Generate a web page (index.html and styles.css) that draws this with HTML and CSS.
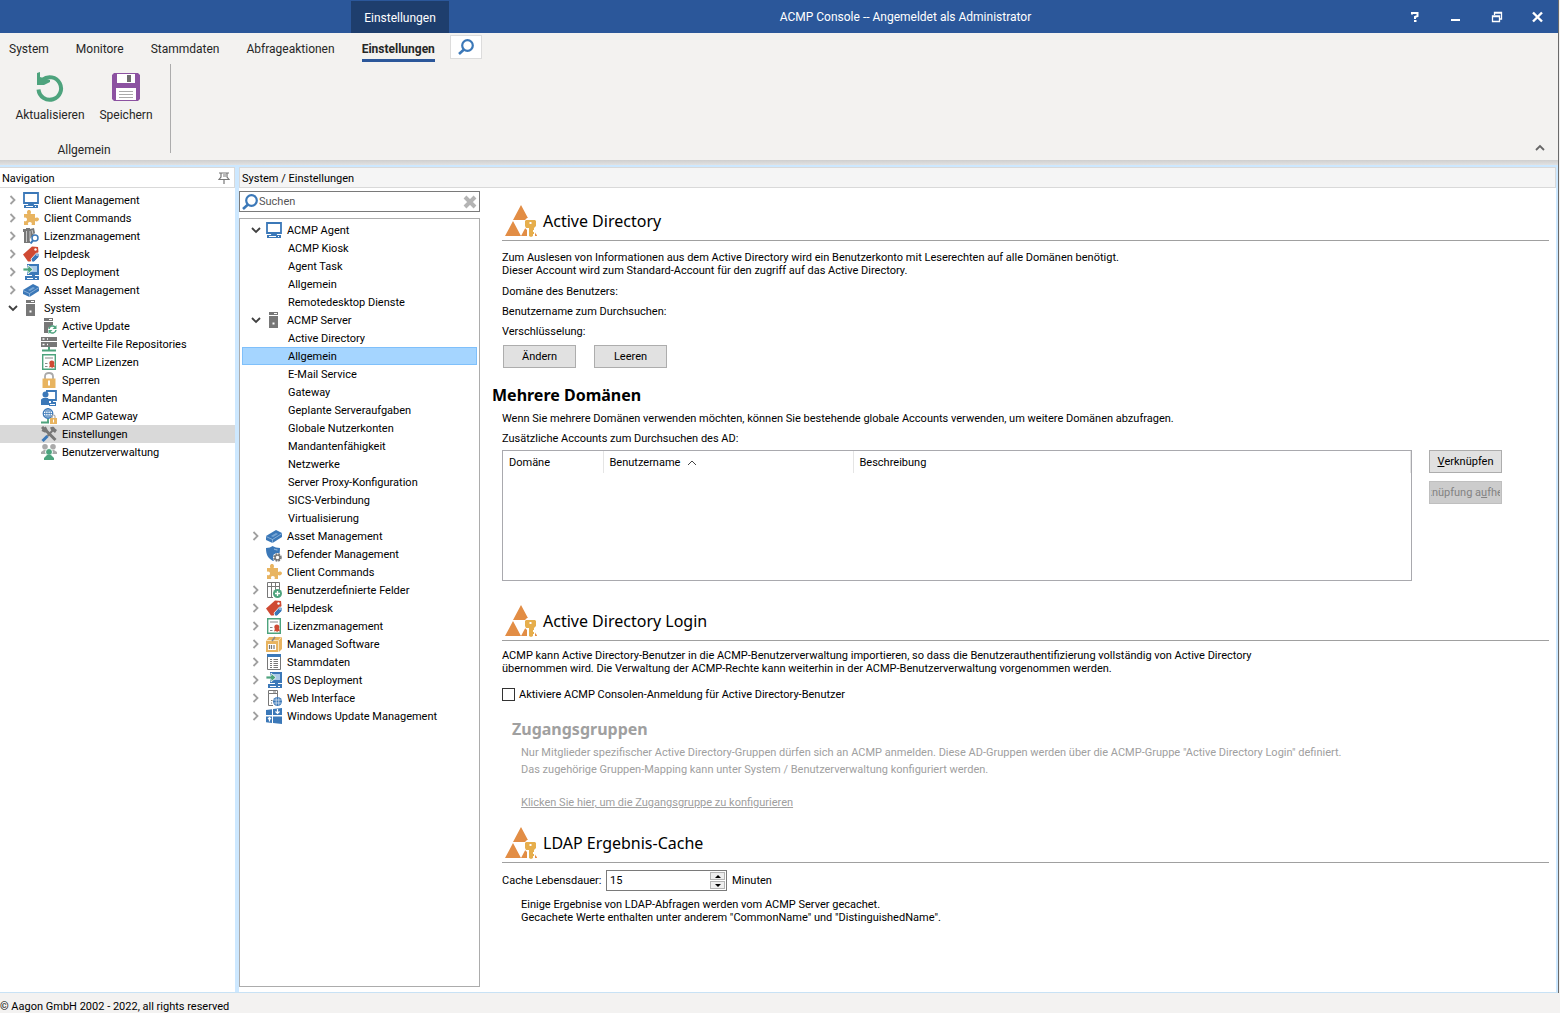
FILE: index.html
```html
<!DOCTYPE html>
<html lang="de">
<head>
<meta charset="utf-8">
<meta name="viewport" content="width=device-width, initial-scale=1">
<title>ACMP Console</title>
<link rel="stylesheet" href="styles.css">
</head>
<body>
<svg class="sprite" aria-hidden="true">
  <symbol id="closed" viewBox="0 0 10 10"><path d="M2.500 1l4 4-4 4" fill="none" stroke="#a0a0a0" stroke-width="1.800"/></symbol>
  <symbol id="open" viewBox="0 0 10 10"><path d="M1 3l4 4 4-4" fill="none" stroke="#404040" stroke-width="1.800"/></symbol>
  <symbol id="monitor" viewBox="0 0 16 16"><path d="M1 1h14v10H1zM6 11v2h4v-2" fill="none" stroke="#3b78b8" stroke-width="1.800"/><path d="M1 13h14v3H1z" fill="#3b78b8"/><path d="M3 14.500h7M12 14.500h1" stroke="#fff"/></symbol>
  <symbol id="puzzle" viewBox="0 0 16 16"><path d="M1 4h3.500C3.500 2.500 4 0 6 0s2.500 2.500 1.500 4H12v4c1.500-1 4-.5 4 1.300S13.500 12 12 11v4H8.500c1-2-.2-3-1.700-3s-2.500 1.200-1.500 3H1v-4c1.800.8 3-.2 3-1.600S2.700 7 1 7.800z" fill="#e8b460"/></symbol>
  <symbol id="binders" viewBox="0 0 16 16"><path d="M0 1h3V0h4v1l4-1 1 5-2 2-3 4v4H1V4H0z" fill="#777"/><path d="M3.500 3v11M7 3v10M9 2l1 4" stroke="#fff" stroke-width=".6"/><circle cx="12" cy="10" r="3" fill="#fff" stroke="#3b78b8" stroke-width="1.500"/><path d="M10 12.500L7.500 15.500" stroke="#3b78b8" stroke-width="2"/></symbol>
  <symbol id="tags" viewBox="0 0 16 16"><path d="M0 8.500L9 .5l6 .5.500 5-8 9.500H5z" fill="#cf4a33"/><circle cx="12.500" cy="3.500" r="1.200" fill="#fff"/><path d="M8 13l5.500-6 2.500.500v3.500L11 16H9z" fill="#3b78b8" stroke="#fff" stroke-width=".8"/><circle cx="14" cy="9" r=".8" fill="#fff"/></symbol>
  <symbol id="deploy" viewBox="0 0 16 16"><path d="M4 0h12v11H4z" fill="#3b78b8"/><path d="M6 2h8v6H6z" fill="#a9c9e8"/><path d="M9 11h3v2H9zM2 12h14v4H2z" fill="#3b78b8"/><path d="M4 14.500h6M12 14.500h2" stroke="#fff"/><path d="M0 4h5V1l5 4.500L5 10V7H0z" fill="#4da37d" stroke="#fff" stroke-width=".8"/></symbol>
  <symbol id="asset" viewBox="0 0 16 16"><path d="M0 8l10-6 6 3v4L6.500 15 0 12z" fill="#3b78b8"/><path d="M0 8.500l6.500 3L16 5.500M6.500 11.500V15" fill="none" stroke="#b8d2ec" stroke-width=".6"/><path d="M5 8l5-3 2 1-5 3z" fill="#78a6d5"/></symbol>
  <symbol id="server" viewBox="0 0 16 16"><path d="M3 0h9v3H3zM3 4h9v12H3z" fill="#777"/><path d="M8 1.500h3" stroke="#fff"/><path d="M6.500 10.500h2v2h-2z" fill="#fff"/></symbol>
  <symbol id="update" viewBox="0 0 16 16"><path d="M3 0h9v3H3zM3 4h9v3l-5 3v5H3z" fill="#777"/><path d="M8 1.500h3" stroke="#fff"/><path d="M8 11a3.500 3.500 0 0 1 6-2M15 12a3.500 3.500 0 0 1-6 2" fill="none" stroke="#4da37d" stroke-width="1.500"/><path d="M15.500 7v4h-4zM7.500 16v-4h4z" fill="#4da37d"/></symbol>
  <symbol id="repos" viewBox="0 0 16 16"><path d="M0 1h16v4H0zM0 6h16v5H0z" fill="#777"/><path d="M1.500 3h2M1.500 8.500h2M6 3h1M6 8.500h1" stroke="#fff" stroke-width="1.500"/><path d="M8 11v3M1 14.500h14" stroke="#4da37d" stroke-width="2"/></symbol>
  <symbol id="license" viewBox="0 0 16 16"><path d="M1.700.7h12.600v14.600H1.700z" fill="#fff" stroke="#4da37d" stroke-width="1.400"/><path d="M4 4h8M4 9.500h2.500M4 12.500h2.500" stroke="#888"/><path d="M8 13.500l1-3h4l1 3-1.500-.5-1.500 1-1-1z" fill="#cf4a33"/><circle cx="10.800" cy="9" r="2.500" fill="#cf4a33"/></symbol>
  <symbol id="lock" viewBox="0 0 16 16"><path d="M4 7V4.500C4 2 5.500 1 8 1s4 1 4 3.500V7" fill="none" stroke="#aaa" stroke-width="1.800"/><path d="M1.500 6.500h13V16h-13z" fill="#e8b460"/><path d="M7 8.500h2v5H7z" fill="#fff"/></symbol>
  <symbol id="clients" viewBox="0 0 16 16"><path d="M5 1h10v9H7" fill="none" stroke="#3b78b8" stroke-width="1.800"/><circle cx="4.500" cy="4.500" r="3" fill="#3b78b8"/><path d="M0 15V9.500L2 8h5l1 2v5zM10 10h2v2h3v4H8v-3h2z" fill="#3b78b8"/><path d="M9 14.500h5" stroke="#fff"/></symbol>
  <symbol id="gateway" viewBox="0 0 16 16"><circle cx="7" cy="5.500" r="4.800" fill="#fff" stroke="#3b78b8" stroke-width="1.200"/><path d="M2 5.500h10M7 .5v10M3 3h8M3 8h8" stroke="#3b78b8" stroke-width=".8"/><ellipse cx="7" cy="5.500" rx="2.300" ry="4.800" fill="none" stroke="#3b78b8" stroke-width=".8"/><path d="M7 11v3M0 14.500h8" stroke="#4da37d" stroke-width="1.800"/><path d="M11 10V8.500c0-2 3-2 3 0V10" fill="none" stroke="#aaa" stroke-width="1.200"/><path d="M9 10h7v6H9z" fill="#e8b460"/><path d="M12.500 11.500v3" stroke="#fff"/></symbol>
  <symbol id="tools" viewBox="0 0 16 16"><path d="M1 1l3 3M4 3.500L14.500 14" stroke="#777" stroke-width="3"/><path d="M1 4l3 1.500L5.500 4 4 1" fill="none" stroke="#777" stroke-width="2"/><path d="M9 1.500c3-1.500 4-1 5 1l2 1.500-2 3-4-3z" fill="#777"/><path d="M12 4L6.500 10" stroke="#777" stroke-width="2"/><path d="M6.500 10L1.500 15" stroke="#3b78b8" stroke-width="3"/></symbol>
  <symbol id="users" viewBox="0 0 16 16"><circle cx="4" cy="2.800" r="2.800" fill="#aaa"/><circle cx="12" cy="2.800" r="2.800" fill="#aaa"/><path d="M0 10V8l3-2h10l3 2v2z" fill="#aaa"/><circle cx="8" cy="8" r="3.500" fill="#4da37d" stroke="#fff"/><path d="M3 16v-2l3-3h4l3 3v2z" fill="#4da37d"/></symbol>
  <symbol id="shield" viewBox="0 0 16 16"><path d="M0 2c3 0 5-1 6.500-2C8.500 1 11 2 14 2c0 5-.5 9.500-7 13C1.500 12 0 8 0 2z" fill="#3b78b8"/><path d="M8 3c1.500.7 2 .8 3.500 1" stroke="#9fc1e4" fill="none"/><circle cx="11.500" cy="11.500" r="4.500" fill="#fff"/><circle cx="11.500" cy="11.500" r="3.500" fill="none" stroke="#777" stroke-width="1.500" stroke-dasharray="1.800 1"/><circle cx="11.500" cy="11.500" r="2.400" fill="none" stroke="#777" stroke-width="1.400"/></symbol>
  <symbol id="fields" viewBox="0 0 16 16"><path d="M1.500 15.500V.5h12V8M1.500 4.500h12M5.500 1v14.500M9.500 1v8M1.500 15.500H7" fill="none" stroke="#777"/><circle cx="11.500" cy="11.500" r="4.500" fill="#4da37d"/><path d="M11.500 9v5M9 11.500h5" stroke="#fff" stroke-width="1.300"/></symbol>
  <symbol id="software" viewBox="0 0 16 16"><path d="M0 5l3-4h13v12l-3 3H0z" fill="#e8b460"/><path d="M0 4.500h12.500V16M12.500 4.500L15.500 1" fill="none" stroke="#f8e3bd"/><path d="M6 5l3-4" stroke="#888" stroke-width="1.500"/><path d="M2 8h8v6H2z" fill="#fff"/><path d="M3.500 9v4M5.500 9v4M8 9v4" stroke="#777" stroke-width="1.200"/></symbol>
  <symbol id="list" viewBox="0 0 16 16"><path d="M1.500 1.500h13v14h-13z" fill="#fff" stroke="#777"/><path d="M1 0h14v3H1z" fill="#3b78b8"/><path d="M4 5.500h2M4 7.500h2M4 9.500h2M4 11.500h2M4 13.500h2M7.500 5.500H12M7.500 7.500H12M7.500 9.500H12M7.500 11.500H12M7.500 13.500H12" stroke="#777"/></symbol>
  <symbol id="web" viewBox="0 0 16 16"><path d="M2.500.5h9v3h-9zM2.500 3.500h9v4M2.500 3.500v12H7" fill="none" stroke="#777"/><path d="M7 2h3M5 10.500h1.500M5 13h1" stroke="#777"/><circle cx="11.500" cy="11.500" r="4.500" fill="#3b78b8"/><path d="M7.500 10h8M7.500 13h8M10.200 7.500v8M12.800 7.500v8" stroke="#fff" stroke-width=".6"/></symbol>
  <symbol id="winupdate" viewBox="0 0 16 16"><path d="M0 2l6-.8v5.800H0zM7 1l9-1v7H7zM0 8.500h6V15l-6-.8zM7 8.500h9V16l-9-1z" fill="#3b78b8"/><path d="M11.500 1v4M9.500 3.500l2 2 2-2M3.500 13.500V9.500M2 11l1.500-1.500L5 11" fill="none" stroke="#fff" stroke-width="1.200"/></symbol>
  <symbol id="search" viewBox="0 0 16 16"><circle cx="9.500" cy="6.500" r="5.300" fill="#fff" stroke="#3b78b8" stroke-width="2.200"/><path d="M6 10.500L1 15" stroke="#3b78b8" stroke-width="2.600"/></symbol>
  <symbol id="directory" viewBox="0 0 32 32"><path d="M16 0l8 15H8zM8 16l8 15H0zM24 16l8 15H16z" fill="#e28d45"/><path d="M20 15l2-2h8l3 2v14h-2l-1-4v7h-8v-7l-2-2z" fill="#fff"/><path d="M31 29l1 2h-2zM18.500 31l3-5v5z" fill="#e28d45"/><path d="M20 16l1-1h9l1 1v5l-2 2v2h-1v2h1v2h-1v2l-2 1-2-1v-8h-3l-1-2z" fill="#e6ae4c"/><path d="M24.500 17h2v2h-2z" fill="#fff"/></symbol>
</svg>

<div class="window">
  <header class="titlebar">
    <div class="context-tab">Einstellungen</div>
    <div class="title">ACMP Console -- Angemeldet als Administrator</div>
    <button class="caption" aria-label="Hilfe"><svg class="i12" viewBox="0 0 12 12"><path d="M3 3.500V2h5.500v3L6 6v2M5 10h2.500" fill="none" stroke="#fff" stroke-width="2"/></svg></button>
    <button class="caption" aria-label="Minimieren"><svg class="i12" viewBox="0 0 12 12"><path d="M1 9h9" stroke="#fff" stroke-width="2"/></svg></button>
    <button class="caption" aria-label="Wiederherstellen"><svg class="i12" viewBox="0 0 12 12"><path d="M1.500 5v5.500h7V5zM3.500 4V1.500h7V8H9M1 5.500h8M3 2h8" fill="none" stroke="#fff" stroke-width="1.300"/></svg></button>
    <button class="caption" aria-label="Schließen"><svg class="i12" viewBox="0 0 12 12"><path d="M1 1.500l9 9M10 1.500l-9 9" stroke="#fff" stroke-width="2.400"/></svg></button>
  </header>

  <section class="ribbon">
    <nav class="tabs">
      <a href="#">System</a>
      <a href="#">Monitore</a>
      <a href="#">Stammdaten</a>
      <a href="#">Abfrageaktionen</a>
      <a href="#" class="active" aria-current="page">Einstellungen</a>
      <button class="tab-search" aria-label="Suchen"><svg class="i16"><use href="#search"/></svg></button>
    </nav>
    <div class="ribbon-body">
      <div class="group">
        <div class="group-tools">
          <button class="tool"><svg class="i32" viewBox="0 0 32 32"><path d="M8.500 8.800A11.300 11.300 0 1 1 4.500 18.500" fill="none" stroke="#4da37d" stroke-width="4"/><path d="M3 14V2l3-1v5l10 3v2l-6 3z" fill="#4da37d"/></svg>Aktualisieren</button>
          <button class="tool"><svg class="i32" viewBox="0 0 32 32"><path d="M2 4l2-2h24l2 2v24l-2 2H4l-2-2z" fill="#8c52a1"/><path d="M7 3h18v9H7zM6 17h20v12H6z" fill="#fff"/><path d="M17 4h4v7h-4z" fill="#6d6d6d"/><path d="M9 20.500h14M9 23.500h14M9 26.500h14" stroke="#aaa"/></svg>Speichern</button>
        </div>
        <div class="group-label">Allgemein</div>
      </div>
      <div class="separator"></div>
      <button class="collapse" aria-label="Menüband minimieren"><svg class="i10" viewBox="0 0 10 10"><path d="M1 7l4-4 4 4" fill="none" stroke="#666" stroke-width="1.800"/></svg></button>
    </div>
  </section>

  <main class="workspace">
    <aside class="navigation">
      <h2 class="panel-head">Navigation<button class="pin" aria-label="Anheften"><svg class="i12" viewBox="0 0 12 12"><path d="M1 1h10M3 1v4L1 7.500h10L9 5V1M6 7.500V12" fill="none" stroke="#777" stroke-width="1.200"/><path d="M5 2h3v3H5z" fill="#bbb"/></svg></button></h2>
      <ul class="tree nav-tree">
        <li><a href="#"><svg class="i10"><use href="#closed"/></svg><svg class="i16"><use href="#monitor"/></svg>Client Management</a></li>
        <li><a href="#"><svg class="i10"><use href="#closed"/></svg><svg class="i16"><use href="#puzzle"/></svg>Client Commands</a></li>
        <li><a href="#"><svg class="i10"><use href="#closed"/></svg><svg class="i16"><use href="#binders"/></svg>Lizenzmanagement</a></li>
        <li><a href="#"><svg class="i10"><use href="#closed"/></svg><svg class="i16"><use href="#tags"/></svg>Helpdesk</a></li>
        <li><a href="#"><svg class="i10"><use href="#closed"/></svg><svg class="i16"><use href="#deploy"/></svg>OS Deployment</a></li>
        <li><a href="#"><svg class="i10"><use href="#closed"/></svg><svg class="i16"><use href="#asset"/></svg>Asset Management</a></li>
        <li><a href="#"><svg class="i10"><use href="#open"/></svg><svg class="i16"><use href="#server"/></svg>System</a>
          <ul>
            <li><a href="#"><svg class="i16"><use href="#update"/></svg>Active Update</a></li>
            <li><a href="#"><svg class="i16"><use href="#repos"/></svg>Verteilte File Repositories</a></li>
            <li><a href="#"><svg class="i16"><use href="#license"/></svg>ACMP Lizenzen</a></li>
            <li><a href="#"><svg class="i16"><use href="#lock"/></svg>Sperren</a></li>
            <li><a href="#"><svg class="i16"><use href="#clients"/></svg>Mandanten</a></li>
            <li><a href="#"><svg class="i16"><use href="#gateway"/></svg>ACMP Gateway</a></li>
            <li><a href="#" class="current" aria-current="page"><svg class="i16"><use href="#tools"/></svg>Einstellungen</a></li>
            <li><a href="#"><svg class="i16"><use href="#users"/></svg>Benutzerverwaltung</a></li>
          </ul>
        </li>
      </ul>
    </aside>

    <section class="document">
      <h1 class="panel-head">System / Einstellungen</h1>
      <div class="columns">
        <div class="browser">
          <div class="search">
            <svg class="i16"><use href="#search"/></svg>
            <input type="text" placeholder="Suchen" aria-label="Suchen">
            <button aria-label="Suche löschen"><svg class="i14" viewBox="0 0 14 14"><path d="M2 2l10 10M12 2L2 12" stroke="#b4b4b4" stroke-width="4"/></svg></button>
          </div>
          <ul class="tree settings-tree">
            <li><a href="#"><svg class="i10"><use href="#open"/></svg><svg class="i16"><use href="#monitor"/></svg>ACMP Agent</a>
              <ul>
                <li><a href="#">ACMP Kiosk</a></li>
                <li><a href="#">Agent Task</a></li>
                <li><a href="#">Allgemein</a></li>
                <li><a href="#">Remotedesktop Dienste</a></li>
              </ul>
            </li>
            <li><a href="#"><svg class="i10"><use href="#open"/></svg><svg class="i16"><use href="#server"/></svg>ACMP Server</a>
              <ul>
                <li><a href="#">Active Directory</a></li>
                <li><a href="#" class="current" aria-current="page">Allgemein</a></li>
                <li><a href="#">E-Mail Service</a></li>
                <li><a href="#">Gateway</a></li>
                <li><a href="#">Geplante Serveraufgaben</a></li>
                <li><a href="#">Globale Nutzerkonten</a></li>
                <li><a href="#">Mandantenfähigkeit</a></li>
                <li><a href="#">Netzwerke</a></li>
                <li><a href="#">Server Proxy-Konfiguration</a></li>
                <li><a href="#">SICS-Verbindung</a></li>
                <li><a href="#">Virtualisierung</a></li>
              </ul>
            </li>
            <li><a href="#"><svg class="i10"><use href="#closed"/></svg><svg class="i16"><use href="#asset"/></svg>Asset Management</a></li>
            <li><a href="#"><svg class="i10"></svg><svg class="i16"><use href="#shield"/></svg>Defender Management</a></li>
            <li><a href="#"><svg class="i10"></svg><svg class="i16"><use href="#puzzle"/></svg>Client Commands</a></li>
            <li><a href="#"><svg class="i10"><use href="#closed"/></svg><svg class="i16"><use href="#fields"/></svg>Benutzerdefinierte Felder</a></li>
            <li><a href="#"><svg class="i10"><use href="#closed"/></svg><svg class="i16"><use href="#tags"/></svg>Helpdesk</a></li>
            <li><a href="#"><svg class="i10"><use href="#closed"/></svg><svg class="i16"><use href="#license"/></svg>Lizenzmanagement</a></li>
            <li><a href="#"><svg class="i10"><use href="#closed"/></svg><svg class="i16"><use href="#software"/></svg>Managed Software</a></li>
            <li><a href="#"><svg class="i10"><use href="#closed"/></svg><svg class="i16"><use href="#list"/></svg>Stammdaten</a></li>
            <li><a href="#"><svg class="i10"><use href="#closed"/></svg><svg class="i16"><use href="#deploy"/></svg>OS Deployment</a></li>
            <li><a href="#"><svg class="i10"><use href="#closed"/></svg><svg class="i16"><use href="#web"/></svg>Web Interface</a></li>
            <li><a href="#"><svg class="i10"><use href="#closed"/></svg><svg class="i16"><use href="#winupdate"/></svg>Windows Update Management</a></li>
          </ul>
        </div>

        <div class="settings">
          <section>
            <h2 class="heading"><svg class="i32"><use href="#directory"/></svg>Active Directory</h2>
            <p class="lead">Zum Auslesen von Informationen aus dem Active Directory wird ein Benutzerkonto mit Leserechten auf alle Domänen benötigt.<br>Dieser Account wird zum Standard-Account für den zugriff auf das Active Directory.</p>
            <div class="facts">
              <div>Domäne des Benutzers:</div>
              <div>Benutzername zum Durchsuchen:</div>
              <div>Verschlüsselung:</div>
            </div>
            <div class="actions">
              <button class="btn">Ändern</button>
              <button class="btn">Leeren</button>
            </div>
            <h3 class="subheading wide">Mehrere Domänen</h3>
            <div class="facts">
              <div>Wenn Sie mehrere Domänen verwenden möchten, können Sie bestehende globale Accounts verwenden, um weitere Domänen abzufragen.</div>
              <div>Zusätzliche Accounts zum Durchsuchen des AD:</div>
            </div>
            <div class="accounts">
              <div class="grid">
                <table>
                  <colgroup><col class="col-domain"><col class="col-user"><col></colgroup>
                  <thead><tr><th>Domäne</th><th aria-sort="ascending">Benutzername<svg class="i10" viewBox="0 0 10 10"><path d="M1 7l4-4 4 4" fill="none" stroke="#444"/></svg></th><th>Beschreibung</th></tr></thead>
                  <tbody></tbody>
                </table>
              </div>
              <div class="account-actions">
                <button class="btn"><span><u>V</u>erknüpfen</span></button>
                <button class="btn" disabled><span>Verknüpfung a<u>u</u>fheben</span></button>
              </div>
            </div>
          </section>

          <section>
            <h2 class="heading"><svg class="i32"><use href="#directory"/></svg>Active Directory Login</h2>
            <p>ACMP kann Active Directory-Benutzer in die ACMP-Benutzerverwaltung importieren, so dass die Benutzerauthentifizierung vollständig von Active Directory<br>übernommen wird. Die Verwaltung der ACMP-Rechte kann weiterhin in der ACMP-Benutzerverwaltung vorgenommen werden.</p>
            <label class="check"><input type="checkbox">Aktiviere ACMP Consolen-Anmeldung für Active Directory-Benutzer</label>
            <div class="groups">
              <h3 class="subheading">Zugangsgruppen</h3>
              <p>Nur Mitglieder spezifischer Active Directory-Gruppen dürfen sich an ACMP anmelden. Diese AD-Gruppen werden über die ACMP-Gruppe "Active Directory Login" definiert.<br>Das zugehörige Gruppen-Mapping kann unter System / Benutzerverwaltung konfiguriert werden.</p>
              <a href="#">Klicken Sie hier, um die Zugangsgruppe zu konfigurieren</a>
            </div>
          </section>

          <section>
            <h2 class="heading"><svg class="i32"><use href="#directory"/></svg>LDAP Ergebnis-Cache</h2>
            <div class="lifetime">
              <label for="lifetime">Cache Lebensdauer:</label>
              <div class="spinner">
                <input id="lifetime" type="number" value="15">
                <div class="steps">
                  <button aria-label="Erhöhen"><svg viewBox="0 0 6 3"><path d="M0 3l3-3 3 3z"/></svg></button>
                  <button aria-label="Verringern"><svg viewBox="0 0 6 3"><path d="M0 0l3 3 3-3z"/></svg></button>
                </div>
              </div>
              <span>Minuten</span>
            </div>
            <p class="note">Einige Ergebnise von LDAP-Abfragen werden vom ACMP Server gecachet.<br>Gecachete Werte enthalten unter anderem "CommonName" und "DistinguishedName".</p>
          </section>
        </div>
      </div>
    </section>
  </main>
</div>
<footer class="statusbar">© Aagon GmbH 2002 - 2022, all rights reserved</footer>
</body>
</html>
```
FILE: styles.css
```css
*, *::before, *::after { box-sizing: border-box; }

body {
  margin: 0;
  min-height: 100vh;
  display: flex;
  flex-direction: column;
  background: #f3f2f1;
  color: #000;
  font: 11px/13px Roboto, Tahoma, sans-serif;
}

h1, h2, h3, p, ul { margin: 0; padding: 0; font: inherit; }
ul { list-style: none; }
a { color: inherit; text-decoration: none; }
button, input { font: inherit; color: inherit; margin: 0; padding: 0; border: 0; background: none; }
svg { display: block; flex: none; }

.sprite { position: absolute; width: 0; height: 0; }
.i10 { width: 10px; height: 10px; }
.i12 { width: 12px; height: 12px; }
.i14 { width: 14px; height: 14px; }
.i16 { width: 16px; height: 16px; }
.i32 { width: 32px; height: 32px; }

.window {
  flex: 1;
  display: flex;
  flex-direction: column;
  margin-right: 1px;
  border-right: 1px solid #6a6a6a;
}

/* Title bar */
.titlebar {
  display: flex;
  align-items: stretch;
  height: 33px;
  background: #2b579a;
  color: #fff;
  font-size: 12px;
}
.context-tab {
  width: 98px;
  margin: 1px 0 0 351px;
  background: #1e3e6d;
  line-height: 35px;
  text-align: center;
}
.title { flex: 1; padding-right: 32px; line-height: 34px; text-align: center; }
.caption { display: flex; align-items: center; justify-content: center; width: 41px; }

/* Ribbon */
.ribbon { background: #f3f2f0; color: #262626; font-size: 12px; line-height: 16px; }
.tabs { display: flex; align-items: flex-start; gap: 27px; height: 31px; padding: 2px 9px 0; }
.tabs a { padding: 6px 0 2px; border-bottom: 3px solid transparent; }
.tabs .active { border-color: #2b579a; font-weight: 700; }
.tab-search {
  display: flex;
  align-items: center;
  justify-content: center;
  width: 32px;
  height: 24px;
  margin-left: -12px;
  border: 1px solid #dcdcdc;
  background: #fff;
}
.ribbon-body { display: flex; align-items: flex-start; height: 96px; }
.group { padding: 7px 3px 0 6px; }
.group-tools { display: flex; }
.tool { display: flex; flex-direction: column; align-items: center; gap: 4px; width: 88px; }
.tool + .tool { width: 64px; }
.group-label { margin-top: 19px; padding-left: 4px; text-align: center; }
.separator { width: 1px; height: 89px; margin-left: 9px; background: #acacac; }
.collapse { align-self: flex-end; margin: 0 13px 7px auto; }

/* Workspace */
.workspace {
  flex: 1;
  display: grid;
  grid-template-columns: 235px minmax(0, 1fr);
  column-gap: 4px;
  padding: 7px 2px 0 0;
  border-bottom: 1px solid #c8e2f5;
  background: linear-gradient(#cfcfcf, #e2e2e2 5px, #cde8ff 5px);
}
.panel-head {
  display: flex;
  align-items: center;
  justify-content: space-between;
  height: 21px;
  padding: 1px 3px 0 2px;
  border: 1px solid #d9d9d9;
}
.navigation { background: #fff; }
.navigation .panel-head { border-left: 0; padding-right: 4px; }
.document { display: flex; flex-direction: column; background: #fff; }
.document .panel-head { background: #f5f5f5; }

.tree a { display: flex; align-items: center; height: 18px; gap: 5px; white-space: nowrap; }
.nav-tree { padding-top: 3px; }
.nav-tree a { padding-left: 8px; }
.nav-tree ul a { padding-left: 41px; }
.nav-tree .current { background: #d9d9d9; }

.columns { flex: 1; display: flex; padding: 3px 0 5px; }
.browser { display: flex; flex-direction: column; gap: 6px; width: 241px; }
.search { display: flex; align-items: center; height: 21px; padding: 0 2px; border: 1px solid #7a7a7a; }
.search input { flex: 1; min-width: 0; padding-left: 1px; outline: 0; }
.search input::placeholder { color: #555; opacity: 1; }
.settings-tree { flex: 1; padding: 2px; border: 1px solid #acacac; }
.settings-tree a { padding-left: 8px; border: 1px solid transparent; }
.settings-tree ul a { padding-left: 45px; }
.settings-tree .current { border-color: #7fc0fb; background: #a5d5ff; }

/* Settings page */
.settings { flex: 1; min-width: 0; padding: 13px 7px 0 22px; }
.settings section + section { margin-top: 23px; }
.settings section + section:last-child { margin-top: 15px; }
.heading, .subheading { font-family: "Noto Sans", Tahoma, sans-serif; font-size: 16px; line-height: 24px; }
.heading {
  display: flex;
  align-items: center;
  gap: 6px;
  height: 37px;
  padding: 0 0 3px 3px;
  border-bottom: 1px solid #a0a0a0;
}
.subheading { font-weight: 700; }
.subheading.wide { margin: 15px 0 2px -10px; }
.heading + p { margin: 8px 0 4px; }
.heading + .lead { margin: 10px 0 5px; }
.facts { line-height: 20px; }
.actions { display: flex; gap: 18px; margin-top: 3px; padding-left: 1px; }
.btn {
  display: flex;
  align-items: center;
  justify-content: center;
  width: 73px;
  height: 23px;
  padding: 0 1px;
  border: 1px solid #adadad;
  background: #e1e1e1;
  white-space: nowrap;
}
.btn span { display: flex; justify-content: center; width: 100%; overflow: hidden; }
.btn:disabled { border-color: #bfbfbf; background: #ccc; color: #838383; }
.accounts { display: flex; align-items: flex-start; gap: 17px; margin: 1px 47px 0 0; }
.grid { flex: 1; height: 131px; border: 1px solid #a9a9ae; }
.grid table { width: 100%; border-collapse: collapse; table-layout: fixed; }
.grid th { height: 22px; padding: 0 6px; border-right: 1px solid #e5e5e5; font-weight: 400; text-align: left; }
.grid th svg { display: inline-block; margin-left: 7px; vertical-align: middle; }
.col-domain { width: 100px; }
.col-user { width: 250px; }
.account-actions { display: grid; gap: 8px; }

.check { display: flex; align-items: center; gap: 4px; height: 20px; margin-top: 9px; }
.check input { appearance: none; width: 13px; height: 13px; border: 1px solid #333; background: #fff; }
.groups { padding: 13px 0 0 10px; color: #a0a0a0; line-height: 17px; }
.groups p { padding: 3px 0 16px 9px; }
.groups a { display: inline-block; margin-left: 9px; text-decoration: underline; }

.lifetime { display: flex; align-items: center; gap: 5px; padding-top: 7px; }
.lifetime label { width: 99px; white-space: nowrap; }
.spinner { display: flex; width: 121px; height: 21px; padding: 1px; border: 1px solid #7a7a7a; }
.spinner input { flex: 1; min-width: 0; padding-left: 2px; appearance: textfield; outline: 0; }
.spinner input::-webkit-inner-spin-button { appearance: none; }
.steps { display: grid; width: 15px; gap: 1px; }
.steps button { display: flex; align-items: center; justify-content: center; border: 1px solid #b4b4b4; background: #eee; }
.steps svg { width: 6px; height: 3px; }
.note { padding: 7px 0 0 19px; }

.statusbar { height: 20px; padding-top: 1px; line-height: 26px; white-space: nowrap; overflow: hidden; }
```
